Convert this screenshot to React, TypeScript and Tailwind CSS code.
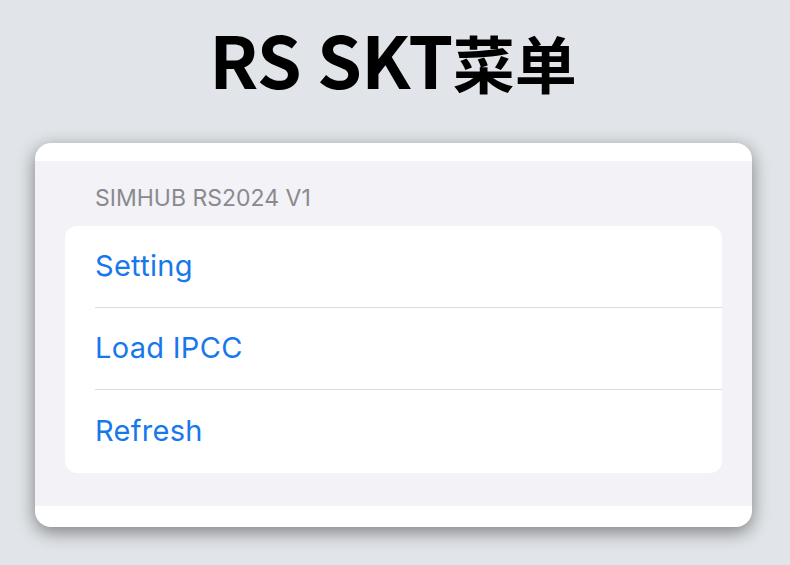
export default function App() {
  const items = ["Setting", "Load IPCC", "Refresh"];
  return (
    <div className="w-[790px] h-[565px] bg-[#e1e4e8] flex flex-col overflow-hidden" style={{ fontFamily: "Inter, 'Noto Sans CJK SC', sans-serif" }}>
      <h1 className="mt-[14px] h-[88px] leading-[88px] font-bold text-black text-center whitespace-nowrap pr-[4px]" style={{ fontFamily: "'Noto Sans CJK SC', sans-serif" }}>
        <span className="text-[72px] tracking-[-0.5px]">RS SKT</span>
        <span className="text-[62px]">菜单</span>
      </h1>
      <div className="ml-[35px] mt-[41px] w-[717px] rounded-[16px] bg-white pt-[18px] pb-[21px] shadow-[0_5px_18px_rgba(0,0,0,0.45)] overflow-hidden">
        <div className="bg-[#f2f2f7] px-[30px] pb-[33px]">
          <div className="h-[65px] flex items-end pb-[15px] pl-[30px] text-[23px] leading-[26px] text-[#8a8a8e]">
            SIMHUB RS2024 V1
          </div>
          <div className="bg-white rounded-[12px]">
            {items.map((t, i) => (
              <div key={t} className="pl-[30px]">
                <div className={`flex items-center pb-[2px] text-[29px] tracking-[0.3px] text-[#1778ec] ${i < items.length - 1 ? "h-[82px] border-b border-[#dcdce0]" : "h-[83px]"}`}>
                  {t}
                </div>
              </div>
            ))}
          </div>
        </div>
      </div>
    </div>
  );
}
